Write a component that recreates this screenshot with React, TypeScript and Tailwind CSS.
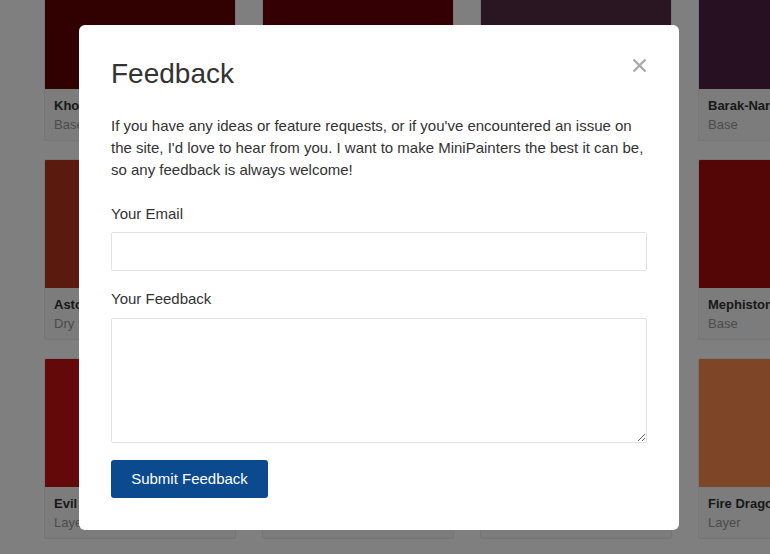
import React from 'react';

type Paint = {
  name: string;
  type: string;
  color: string;
};

const paints: Paint[] = [
  { name: 'Khorne Red', type: 'Base', color: '#620002' },
  { name: 'Wazdakka Red', type: 'Base', color: '#6a0008' },
  { name: 'Naggaroth Night', type: 'Base', color: '#542a44' },
  { name: 'Barak-Nar Burgundy', type: 'Base', color: '#4c2044' },
  { name: 'Astorath Red', type: 'Dry', color: '#b4341c' },
  { name: 'Mephiston Red', type: 'Base', color: '#9a1010' },
  { name: 'Word Bearers Red', type: 'Base', color: '#7a0c10' },
  { name: 'Mephiston Red', type: 'Base', color: '#a80c0c' },
  { name: 'Evil Sunz Scarlet', type: 'Layer', color: '#c81212' },
  { name: 'Wild Rider Red', type: 'Layer', color: '#e8300e' },
  { name: 'Troll Slayer Orange', type: 'Layer', color: '#f0501a' },
  { name: 'Fire Dragon Bright', type: 'Layer', color: '#fd8c4c' },
];

const PaintCard = ({ paint }: { paint: Paint }) => {
  return <div className="border border-[#ececec] bg-[#f8f8f8] rounded-[2px] overflow-hidden">
      <div className="h-[128px]" style={{ backgroundColor: paint.color }} />
      <div className="px-[9px] pt-[8px] pb-[5px]">
        <div className="text-[13px] leading-[18px] font-bold text-[#333] whitespace-nowrap">{paint.name}</div>
        <div className="text-[13px] leading-[20px] text-[#999] whitespace-nowrap">{paint.type}</div>
      </div>
    </div>;
};

export default function App() {
  return <div className="relative w-[770px] h-[554px] overflow-hidden bg-white" style={{ fontFamily: '"Liberation Sans", Arial, sans-serif' }}>
      {/* Paint grid behind the modal */}
      <div className="grid grid-cols-[192px_192px_192px_192px] gap-x-[26px] gap-y-[18px] pl-[44px] -mt-[40px]">
        {paints.map((paint, i) => <PaintCard key={i} paint={paint} />)}
      </div>

      {/* Backdrop */}
      <div className="absolute inset-0 bg-black/50" />

      {/* Feedback modal */}
      <div className="absolute left-[79px] top-[25px] w-[600px] h-[505px] bg-white rounded-[6px] px-[32px] pt-[32px] pb-[32px] text-[#333]">
        <button className="absolute right-[31px] top-[31px] w-[18px] h-[18px] flex items-center justify-center" aria-label="Close">
          <svg width="15" height="15" viewBox="0 0 15 15">
            <path d="M1.5 1.5 L13.5 13.5 M13.5 1.5 L1.5 13.5" stroke="#aaaaaa" strokeWidth="2.4" strokeLinecap="butt" />
          </svg>
        </button>
        <h2 className="text-[28px] leading-[34px] font-normal text-[#333]">Feedback</h2>
        <p className="mt-[24px] text-[15px] leading-[22px] text-[#333]">
          If you have any ideas or feature requests, or if you've encountered an issue on the site, I'd love to hear from you. I want to make MiniPainters the best it can be, so any feedback is always welcome!
        </p>
        <label className="block mt-[22px] text-[15px] leading-[22px] text-[#333]">Your Email</label>
        <input type="email" className="block mt-[7px] w-full h-[39px] border border-[#e3e3e3] rounded-[2px] px-3 text-[15px] outline-none" />
        <label className="block mt-[17px] text-[15px] leading-[22px] text-[#333]">Your Feedback</label>
        <textarea className="block mt-[8px] w-full h-[125px] border border-[#e3e3e3] rounded-[2px] px-3 py-2 text-[15px] outline-none" />
        <button className="mt-[17px] w-[157px] h-[38px] bg-[#0b4a8e] text-white text-[15px] font-medium rounded-[3px]">
          Submit Feedback
        </button>
      </div>
    </div>;
}
